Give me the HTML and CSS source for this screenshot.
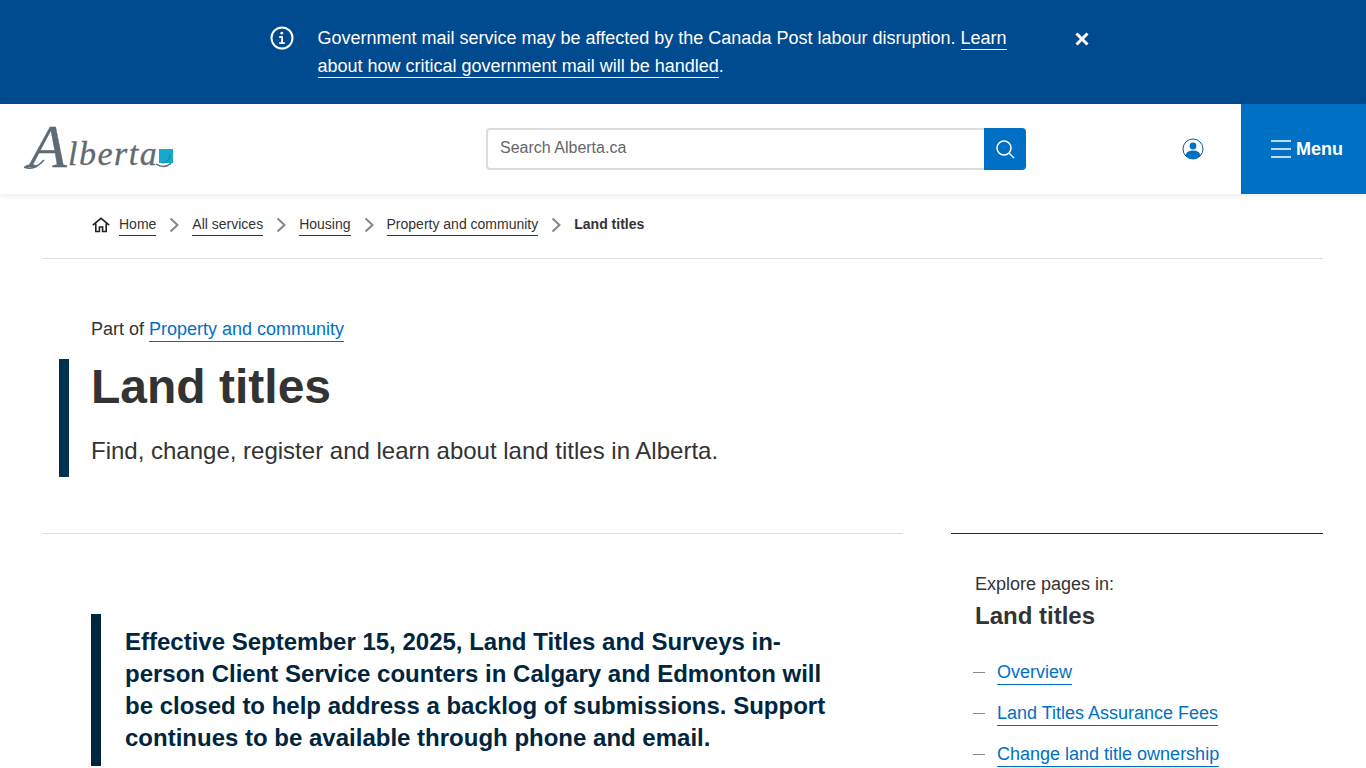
FILE: index.html
```html
<!DOCTYPE html>
<html lang="en">

<head>
  <meta charset="UTF-8" />
  <meta name="viewport" content="width=device-width, initial-scale=1.0" />
  <title>Land titles | Alberta.ca</title>
  <link rel="stylesheet" href="styles.css">
</head>

<body>
  <div class="notice">
    <svg class="notice-icon" viewBox="0 0 24 24" width="24" height="24" fill="none" stroke="#fff" stroke-width="2">
      <circle cx="12" cy="12" r="10.5" />
      <path d="M9.2 11h2.9v6.2M9.2 17.2h5.6" stroke-width="1.8" />
      <circle cx="11.8" cy="7.2" r="1.4" fill="#fff" stroke="none" />
    </svg>
    <p class="notice-text">Government mail service may be affected by the Canada Post labour disruption. <a href="#">Learn about how critical government mail will be handled</a>.</p>
    <svg class="notice-close" viewBox="0 0 14 14" width="14" height="14" fill="none" stroke="#fff" stroke-width="3">
      <path d="M1.5 1.5l11 11M12.5 1.5l-11 11" />
    </svg>
  </div>

  <header class="site-header">
    <a class="logo" href="#" aria-label="Alberta">
      <svg viewBox="0 0 150 46" width="150" height="46" fill="none">
        <path d="M0 41c7 3 13 1 20-7" stroke="#5f6a72" stroke-width="1.6" />
        <path d="M132 38c6 4 12 3 17-3" stroke="#5f6a72" stroke-width="1.5" />
        <text class="logo-cap" x="5" y="41">A</text>
        <text class="logo-rest" x="44" y="39">lberta</text>
        <rect x="135" y="23" width="14" height="14" fill="#17a9c9" />
        <path d="M138 37c4 0 7-3 8-8" stroke="#0b7f9c" stroke-width="1" />
      </svg>
    </a>
    <form class="search">
      <input type="text" placeholder="Search Alberta.ca" />
      <button type="button" aria-label="Search">
        <svg viewBox="0 0 20 20" width="20" height="20" fill="none" stroke="#fff" stroke-width="1.5">
          <circle cx="9" cy="9" r="7" />
          <path d="M14 14l5 5" />
        </svg>
      </button>
    </form>
    <a class="account" href="#" aria-label="Account">
      <svg viewBox="0 0 22 22" width="22" height="22">
        <circle cx="11" cy="11" r="10" fill="#fff" stroke="#0b5c9e" stroke-width="1" />
        <circle cx="11" cy="8" r="3.4" fill="#0070c4" />
        <path d="M3.6 17.5c.6-3.6 3.4-5 7.4-5s6.8 1.4 7.4 5c-1.8 2.2-4.4 3.5-7.4 3.5s-5.6-1.3-7.4-3.5z" fill="#0070c4" />
      </svg>
    </a>
    <a class="menu" href="#">
      <svg viewBox="0 0 20 18" width="20" height="18" fill="none" stroke="#fff" stroke-width="1.6">
        <path d="M0 1h20M0 9h20M0 17h20" />
      </svg>
      <span>Menu</span>
    </a>
  </header>

  <div class="page">
    <nav class="crumbs">
      <svg class="crumb-home" viewBox="0 0 18 16" width="18" height="16" fill="none" stroke="#222" stroke-width="1.6">
        <path d="M.8 8.2L9 1.4l8.2 6.8M3.8 6.5V14.5h3.6V10h3.2v4.5h3.6V6.5" />
      </svg>
      <a href="#">Home</a>
      <svg class="crumb-sep" viewBox="0 0 10 16" width="10" height="16" fill="none" stroke="#858585" stroke-width="2"><path d="M1.5 1.5L8.5 8l-7 6.5" /></svg>
      <a href="#">All services</a>
      <svg class="crumb-sep" viewBox="0 0 10 16" width="10" height="16" fill="none" stroke="#858585" stroke-width="2"><path d="M1.5 1.5L8.5 8l-7 6.5" /></svg>
      <a href="#">Housing</a>
      <svg class="crumb-sep" viewBox="0 0 10 16" width="10" height="16" fill="none" stroke="#858585" stroke-width="2"><path d="M1.5 1.5L8.5 8l-7 6.5" /></svg>
      <a href="#">Property and community</a>
      <svg class="crumb-sep" viewBox="0 0 10 16" width="10" height="16" fill="none" stroke="#858585" stroke-width="2"><path d="M1.5 1.5L8.5 8l-7 6.5" /></svg>
      <strong>Land titles</strong>
    </nav>

    <p class="part-of">Part of <a href="#">Property and community</a></p>
    <div class="title-block">
      <h1>Land titles</h1>
      <p>Find, change, register and learn about land titles in Alberta.</p>
    </div>

    <div class="columns">
      <main class="content">
        <div class="callout">
          <p>Effective September 15, 2025, Land Titles and Surveys in-person Client Service counters in Calgary and Edmonton will be closed to help address a backlog of submissions. Support continues to be available through phone and email.</p>
        </div>
      </main>
      <aside class="side">
        <p class="side-label">Explore pages in:</p>
        <h2>Land titles</h2>
        <ul>
          <li><a href="#">Overview</a></li>
          <li><a href="#">Land Titles Assurance Fees</a></li>
          <li><a href="#">Change land title ownership</a></li>
        </ul>
      </aside>
    </div>
  </div>
</body>

</html>
```

FILE: styles.css
```css
html,
body {
  height: 768px;
  overflow: hidden;
}

body {
  margin: 0;
  font-family: 'Liberation Sans', Arial, sans-serif;
  color: #333;
  background-color: #fff;
}

a {
  color: #0070c4;
  text-decoration: none;
  border-bottom: 1px solid currentColor;
}

p {
  margin: 0;
}

.notice {
  height: 104px;
  box-sizing: border-box;
  padding: 26px 0 0 270px;
  display: flex;
  align-items: flex-start;
  background-color: #004a8f;
  color: #fff;
}

.notice-icon {
  flex: none;
}

.notice-text {
  width: 700px;
  margin: -2px 0 0 23.5px;
  font-size: 18px;
  line-height: 28px;
}

.notice-text a {
  color: #fff;
  padding-bottom: 1px;
}

.notice-close {
  margin: 6px 0 0 57.5px;
  flex: none;
}

.site-header {
  position: relative;
  height: 90px;
  display: flex;
  align-items: center;
  background-color: #fff;
  box-shadow: 0 2px 6px rgba(0, 0, 0, 0.08);
}

.logo {
  width: 150px;
  margin-left: 24px;
  display: flex;
  border: none;
}

.logo svg {
  overflow: visible;
}

.logo-cap,
.logo-rest {
  font-family: 'Liberation Serif', serif;
  font-style: italic;
  fill: #5f6a72;
  stroke: #5f6a72;
  stroke-width: 0.3px;
}

.logo-cap {
  font-size: 62px;
}

.logo-rest {
  font-size: 34px;
  letter-spacing: 1.5px;
}

.search {
  width: 540px;
  height: 42px;
  margin-left: 312px;
  display: flex;
}

.search input {
  flex: 1;
  min-width: 0;
  box-sizing: border-box;
  padding: 0 12px 2px;
  font-family: inherit;
  font-size: 16px;
  color: #333;
  border: 2px solid #dcdcdc;
  border-right: none;
  border-radius: 4px 0 0 4px;
}

.search input::placeholder {
  color: #666;
  opacity: 1;
}

.search button {
  width: 42px;
  padding: 0;
  display: flex;
  align-items: center;
  justify-content: center;
  background-color: #0070c4;
  border: none;
  border-radius: 0 4px 4px 0;
}

.account {
  margin-left: 156px;
  display: flex;
  border: none;
}

.menu {
  margin-left: auto;
  width: 125px;
  height: 90px;
  box-sizing: border-box;
  padding-left: 30px;
  display: flex;
  align-items: center;
  gap: 5px;
  background-color: #0070c4;
  color: #fff;
  border: none;
  font-size: 18px;
  font-weight: bold;
}

.page {
  margin: 0 43px;
}

.crumbs {
  height: 65px;
  box-sizing: border-box;
  padding: 21px 0 0 49px;
  display: flex;
  align-items: flex-start;
  font-size: 14px;
  line-height: 18px;
  border-bottom: 1px solid #dcdcdc;
}

.crumbs a {
  color: #333;
  border-bottom-color: #333;
  padding-bottom: 2px;
}

.crumbs strong {
  color: #333;
}

.crumb-home {
  margin: 2px 9px 0 0;
}

.crumb-sep {
  margin: 2px 13px 0 13px;
}

.part-of {
  margin: 58px 0 0 48px;
  font-size: 18px;
  line-height: 24px;
}

.part-of a {
  padding-bottom: 2px;
}

.title-block {
  margin: 18px 0 0 16px;
  height: 118px;
  box-sizing: border-box;
  padding-left: 22px;
  border-left: 10px solid #00324f;
}

.title-block h1 {
  margin: 0;
  font-size: 48px;
  line-height: 56px;
  color: #333;
}

.title-block p {
  margin-top: 20px;
  font-size: 24px;
  line-height: 32px;
}

.columns {
  margin-top: 56px;
  display: flex;
  gap: 48px;
}

.content {
  width: 860px;
  padding-top: 80px;
  border-top: 1px solid #dcdcdc;
}

.callout {
  margin-left: 48px;
  width: 745px;
  box-sizing: border-box;
  padding: 12px 0 12px 24px;
  border-left: 10px solid #00263f;
}

.callout p {
  font-size: 24px;
  line-height: 32px;
  font-weight: bold;
  color: #00263f;
}

.side {
  width: 372px;
  box-sizing: border-box;
  padding: 38px 24px 0;
  border-top: 1px solid #00324f;
}

.side-label {
  font-size: 18px;
  line-height: 24px;
}

.side h2 {
  margin: 4px 0 0;
  font-size: 24px;
  line-height: 32px;
}

.side ul {
  margin: 28px 0 0;
  padding: 0;
  list-style: none;
}

.side li {
  position: relative;
  margin-bottom: 17px;
  padding-left: 22px;
  font-size: 18px;
  line-height: 24px;
}

.side li::before {
  content: "";
  position: absolute;
  left: -2px;
  top: 12px;
  width: 12px;
  border-top: 1px solid #8a8a8a;
}

.side li a {
  padding-bottom: 2px;
}
```
